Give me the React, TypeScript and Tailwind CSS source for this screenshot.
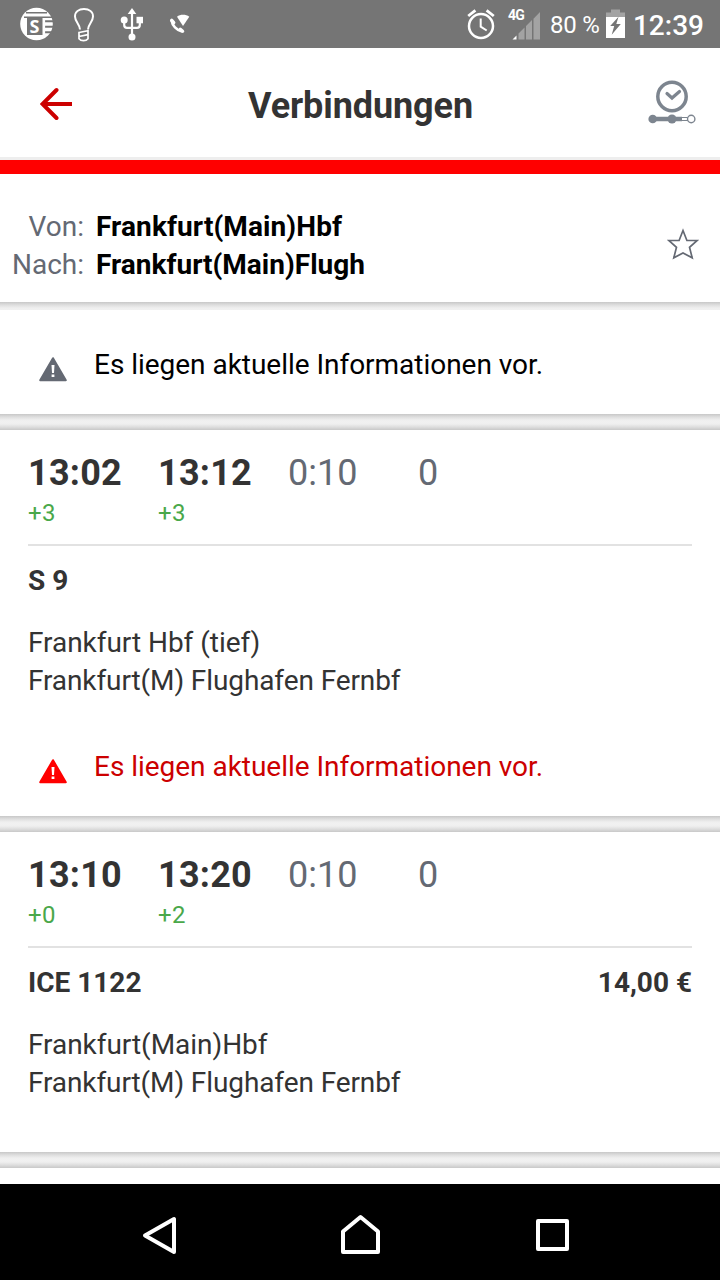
import React from "react";

type Connection = {
  departure: string;
  arrival: string;
  departureDelay: string;
  arrivalDelay: string;
  duration: string;
  changes: string;
  train: string;
  price?: string;
  from: string;
  to: string;
  notice?: boolean;
};

const connections: Connection[] = [
  {
    departure: "13:02",
    arrival: "13:12",
    departureDelay: "+3",
    arrivalDelay: "+3",
    duration: "0:10",
    changes: "0",
    train: "S 9",
    from: "Frankfurt Hbf (tief)",
    to: "Frankfurt(M) Flughafen Fernbf",
    notice: true,
  },
  {
    departure: "13:10",
    arrival: "13:20",
    departureDelay: "+0",
    arrivalDelay: "+2",
    duration: "0:10",
    changes: "0",
    train: "ICE 1122",
    price: "14,00 €",
    from: "Frankfurt(Main)Hbf",
    to: "Frankfurt(M) Flughafen Fernbf",
  },
];

function StatusBar() {
  return (
    <div className="flex h-12 shrink-0 items-center bg-[#757575] text-white">
      <div className="relative ml-5 h-[34px] w-[34px]">
        <svg width="34" height="34" viewBox="0 0 34 34">
          <circle cx="16.500" cy="17" r="16.300" fill="#fff" />
          <path d="M6 5.800h21M4 10.200h28" stroke="#757575" strokeWidth="1.500" />
          <path d="M7 10h15.500v18H7z" fill="#757575" />
          <path d="M24.500 14.300h10M24.500 19.800h10M24.500 25.300h10" stroke="#757575" strokeWidth="1.900" fill="none" />
          <path d="M24.300 11v17" stroke="#fff" strokeWidth="1.600" />
        </svg>
        <span className="absolute top-[10px] left-[9.500px] font-['Open_Sans',sans-serif] text-[18px] leading-[18px] font-bold">S</span>
      </div>
      <svg className="ml-[18px]" width="24" height="36" viewBox="0 0 24 36" fill="none" stroke="#fff" strokeWidth="2">
        <path d="M8 23.500c0-5-5-7.500-5-13C3 5.700 6.800 3 12 3s9 2.700 9 7.500c0 5.500-5 8-5 13" />
        <path d="M7 26.500l9-1.800v8c-2 2.500-7 2.500-9 0zM7 30.500l9-1.800" strokeWidth="1.700" />
      </svg>
      <svg className="ml-6" width="24" height="36" viewBox="0 0 24 36" fill="#fff">
        <path d="M12 2l4.300 6H7.700z" />
        <circle cx="4.200" cy="14" r="3.500" />
        <path d="M16.500 10.800H23v6.500h-6.500z" />
        <circle cx="12" cy="31" r="3.500" />
        <path d="M12 6v24M4.200 14v5c0 2 .8 2.800 2.800 2.800h10c2 0 2.800-.8 2.800-2.800v-5" fill="none" stroke="#fff" strokeWidth="2.200" />
      </svg>
      <svg className="ml-6" width="22" height="22" viewBox="0 0 22 22" fill="#fff">
        <path d="M9 3.800C12.300 1.200 17.700 1.200 21.300 3.800L15 13z" />
        <path d="M3.600 7.500C4.300 12.500 8.500 17.300 14 18.500" fill="none" stroke="#fff" strokeWidth="2.600" />
        <path d="M3.700 7.300l2 2.300M12.300 16.300l2.300 1.900" fill="none" stroke="#fff" strokeWidth="3.400" strokeLinecap="round" />
      </svg>
      <svg className="ml-auto" width="28" height="32" viewBox="0 0 28 32" fill="none" stroke="#fff">
        <circle cx="14" cy="18" r="12" strokeWidth="2.500" />
        <path d="M13.700 10.500v8.200l6 3.800" strokeWidth="2" />
        <path d="M1.200 8l7.200-5.700M26.800 8l-7.200-5.700" strokeWidth="2.800" />
      </svg>
      <div className="relative ml-3 h-8 w-[34px]">
        <span className="absolute top-0 left-[1px] text-[14px] leading-[14px] font-bold tracking-[-0.7px]">4G</span>
        <svg width="34" height="32" viewBox="0 0 34 32">
          <path d="M33 4v27.500h-6.500V10.700zM25 12v19.500h-6V18zM17.500 19.500v12h-6v-6z" fill="#a3a3a3" />
          <path d="M9.500 27.500v4h-4z" fill="#fff" />
        </svg>
      </div>
      <span className="mt-[2px] ml-[9px] w-[56px] whitespace-nowrap text-[24px] leading-8 tracking-[-0.2px]">80 %</span>
      <svg width="19" height="30" viewBox="0 0 19 30">
        <path d="M5 0.500h9v3h5v5H0v-5h5z" fill="#a3a3a3" />
        <path d="M0 8h19v21H0z" fill="#fff" />
        <path d="M12.500 7.700L4.200 17h4L5.700 25.700 14.800 15h-4.500z" fill="#757575" />
      </svg>
      <span className="mt-[3px] mr-4 ml-2 text-[28px] leading-8 font-medium">12:39</span>
    </div>
  );
}

function Header() {
  return (
    <header className="grid h-28 shrink-0 grid-cols-[48px_1fr_48px] items-start border-b-[3px] border-[#eeeeee] bg-white px-6">
      <svg className="mt-8 ml-4" width="34" height="48" viewBox="0 0 34 48" fill="none" stroke="#cc0000" strokeWidth="4">
        <path d="M32 24H3" />
        <path d="M16.500 10L2.500 24l14 14" strokeLinecap="round" />
      </svg>
      <h1 className="mt-[34px] pl-px text-center text-[36px] leading-[48px] font-bold tracking-[-0.1px] text-[#333333]">Verbindungen</h1>
      <svg className="mt-8" width="48" height="48" viewBox="0 0 48 48" fill="none" stroke="#7d858f">
        <circle cx="24" cy="16.500" r="14.200" strokeWidth="3.500" />
        <path d="M19 13.500l5 4.500 7.500-6.500" strokeWidth="3.200" strokeLinecap="round" />
        <path d="M5 39h29" strokeWidth="4.500" />
        <path d="M34 37.500h6M34 40.500h6" strokeWidth="1.200" />
        <circle cx="4.700" cy="39" r="4.300" fill="#7d858f" stroke="none" />
        <circle cx="24" cy="39" r="4.500" fill="#7d858f" stroke="none" />
        <circle cx="43.200" cy="39" r="3.700" fill="#fff" strokeWidth="1.400" />
      </svg>
    </header>
  );
}

function RouteSummary() {
  return (
    <section className="flex h-32 shrink-0 justify-between bg-white pt-[34px] pr-[21px] pl-3 leading-[38px]">
      <div className="grid h-fit grid-cols-[72px_auto] gap-x-3">
        <span className="text-right text-[#646973]">Von:</span>
        <span className="font-bold tracking-[0.1px] text-black">Frankfurt(Main)Hbf</span>
        <span className="text-right text-[#646973]">Nach:</span>
        <span className="font-bold text-black">Frankfurt(Main)Flugh</span>
      </div>
      <svg className="mt-[19px]" width="32" height="34" viewBox="0 0 32 34" fill="none" stroke="#646973" strokeWidth="1.700">
        <path d="M16 3.500l3.900 10H30.200l-7.700 6.800 2.700 10.500L16 26l-9.200 4.800 2.700-10.500-7.700-6.800h10.300z" />
      </svg>
    </section>
  );
}

function Notice({ alert = false }: { alert?: boolean }) {
  return (
    <div className={alert ? "flex text-[#cc0000]" : "flex text-black"}>
      <svg className={alert ? "mt-[9px] text-[#ff0000]" : "mt-[9px] text-[#646973]"} width="28" height="28" viewBox="0 0 28 28">
        <path d="M14 3.200L26.800 25.200H1.200z" fill="currentColor" stroke="currentColor" strokeWidth="2" strokeLinejoin="round" />
        <path d="M12.500 10h3l-.5 8h-2zM12.600 19.500h2.800V22h-2.800z" fill="#fff" />
      </svg>
      <span className="ml-[27px] leading-[38px] tracking-[-0.03px]">Es liegen aktuelle Informationen vor.</span>
    </div>
  );
}

function Divider() {
  return (
    <div className="h-4 shrink-0 bg-[linear-gradient(to_bottom,#c8c8c8_0,#dedede_3px,#efefef_6px,#f1f1f1_8px,#efefef_10px,#dedede_13px,#c8c8c8_16px)]" />
  );
}

function ConnectionCard({ item }: { item: Connection }) {
  return (
    <article className={item.notice ? "h-[386px] shrink-0 bg-white px-7 pt-[19px] text-[#333333]" : "h-80 shrink-0 bg-white px-7 pt-[19px] text-[#333333]"}>
      <div className="grid h-[97px] grid-cols-[130px_130px_130px_1fr] grid-rows-[48px_32px] border-b-2 border-[#e2e2e2] text-[36px] leading-[48px]">
        <span className="font-bold tracking-[0.25px]">{item.departure}</span>
        <span className="font-bold tracking-[0.25px]">{item.arrival}</span>
        <span className="text-[#646973]">{item.duration}</span>
        <span className="text-[#646973]">{item.changes}</span>
        <span className="text-[24px] leading-8 tracking-[0.4px] text-[#4aa84a]">{item.departureDelay}</span>
        <span className="text-[24px] leading-8 tracking-[0.4px] text-[#4aa84a]">{item.arrivalDelay}</span>
      </div>
      <div className="mt-4 flex justify-between font-bold leading-[38px]">
        <span>{item.train}</span>
        {item.price && <span>{item.price}</span>}
      </div>
      <div className="mt-6 leading-[38px]">
        <p className="tracking-[-0.04px]">{item.from}</p>
        <p className="tracking-[-0.1px]">{item.to}</p>
      </div>
      {item.notice && (
        <div className="mt-12 pl-[11px]">
          <Notice alert />
        </div>
      )}
    </article>
  );
}

function NavigationBar() {
  return (
    <nav className="flex h-24 shrink-0 bg-black pt-7 pl-[135px]">
      <svg width="48" height="48" viewBox="0 0 48 48" fill="none" stroke="#fff" strokeWidth="4" strokeLinejoin="round">
        <path d="M39 7v33L10 23.500z" />
      </svg>
      <svg className="ml-[153px]" width="48" height="48" viewBox="0 0 48 48" fill="none" stroke="#fff" strokeWidth="4" strokeLinejoin="round">
        <path d="M7 40V19.500L24.500 5 42 19.500V40z" />
      </svg>
      <svg className="ml-36" width="48" height="48" viewBox="0 0 48 48" fill="none" stroke="#fff" strokeWidth="4" strokeLinejoin="round">
        <path d="M10 9h29v28H10z" />
      </svg>
    </nav>
  );
}

export default function App() {
  return (
    <div className="flex h-[1280px] w-[720px] flex-col overflow-hidden bg-white font-[Roboto,sans-serif] text-[28px]">
      <StatusBar />
      <Header />
      <div className="h-[14px] shrink-0 bg-[#ff0000]" />
      <RouteSummary />
      <div className="h-2 shrink-0 bg-[linear-gradient(to_bottom,#c8c8c8_0,#dedede_3px,#efefef_6px,#f1f1f1_8px)]" />
      <section className="h-[104px] shrink-0 bg-white pt-9 pl-[39px]">
        <Notice />
      </section>
      <Divider />
      {connections.map((item) => (
        <React.Fragment key={item.train}>
          <ConnectionCard item={item} />
          <Divider />
        </React.Fragment>
      ))}
      <div className="flex-1 bg-white" />
      <NavigationBar />
    </div>
  );
}
